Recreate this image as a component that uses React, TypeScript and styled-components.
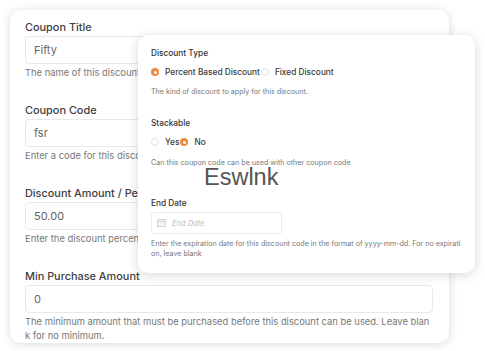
import React from "react";
import styled, { createGlobalStyle } from "styled-components";

const GlobalStyle = createGlobalStyle`
	html, body {
		margin: 0;
		padding: 0;
		background: #ffffff;
	}
	body {
		font-family: Inter, "Liberation Sans", sans-serif;
		-webkit-font-smoothing: antialiased;
	}
	* {
		box-sizing: border-box;
	}
`;

const backFields = [
	{ label: "Coupon Title", value: "Fifty", help: "The name of this discount" },
	{ label: "Coupon Code", value: "fsr", help: "Enter a code for this discount, such as 10PERCENT." },
	{ label: "Discount Amount / Percentage", value: "50.00", help: "Enter the discount percentage. 10 = 10%" },
	{
		label: "Min Purchase Amount",
		value: "0",
		help: "The minimum amount that must be purchased before this discount can be used. Leave blank for no minimum.",
	},
];

export default function App() {
	return (
		<>
			<GlobalStyle />
			<Stage>
				<BackCard>
					{backFields.map((field, index) => (
						<Field key={index}>
							<Label>{field.label}</Label>
							<Input>{field.value}</Input>
							<Help>{field.help}</Help>
						</Field>
					))}
				</BackCard>
				<FrontCard>
					<Title>Discount Type</Title>
					<RadioRow>
						<Radio checked />
						<RadioLabel>Percent Based Discount</RadioLabel>
						<Radio />
						<RadioLabel $wide>Fixed Discount</RadioLabel>
					</RadioRow>
					<SmallHelp $gap={9}>The kind of discount to apply for this discount.</SmallHelp>
					<Title $gap={19}>Stackable</Title>
					<RadioRow>
						<Radio />
						<RadioLabel>Yes</RadioLabel>
						<Radio checked />
						<RadioLabel $wide>No</RadioLabel>
					</RadioRow>
					<SmallHelp $gap={10}>Can this coupon code can be used with other coupon code</SmallHelp>
					<Title $gap={28}>End Date</Title>
					<DateInput>
						<CalendarIcon width="9" height="8" viewBox="0 0 9 8">
							<rect x="0.5" y="0.5" width="8" height="7" fill="#f2f2f2" stroke="#d6d6d6" />
							<line x1="0.5" y1="2.5" x2="8.5" y2="2.5" stroke="#d6d6d6" />
						</CalendarIcon>
						<Placeholder>End Date</Placeholder>
					</DateInput>
					<SmallHelp $gap={5}>
						Enter the expiration date for this discount code in the format of yyyy-mm-dd. For no expiration, leave blank
					</SmallHelp>
					<Watermark>Eswlnk</Watermark>
				</FrontCard>
			</Stage>
		</>
	);
}

const Stage = styled.div`
	position: relative;
	width: 485px;
	height: 351px;
	overflow: hidden;
	padding-top: 10px;
	padding-left: 10px;
`;
const BackCard = styled.div`
	width: 439px;
	height: 333px;
	background: #ffffff;
	border-radius: 10px;
	box-shadow: 0 1px 10px rgba(0, 0, 0, 0.15);
	padding: 8px 16px 0 15px;
	overflow: hidden;
`;
const Field = styled.div`
	margin-bottom: 21px;
`;
const Label = styled.div`
	font-size: 10.9px;
	font-weight: 500;
	line-height: 18px;
	color: #404040;
`;
const Input = styled.div`
	height: 28px;
	border: 1px solid #e8e8e8;
	border-radius: 4px;
	padding: 0 8px;
	display: flex;
	align-items: center;
	font-size: 11px;
	color: #666666;
`;
const Help = styled.div`
	margin-top: 2px;
	font-size: 9.4px;
	line-height: 14px;
	color: #777777;
	word-break: break-all;
`;
const FrontCard = styled.div`
	position: absolute;
	left: 138px;
	top: 35px;
	width: 337px;
	height: 238px;
	background: #ffffff;
	border-radius: 10px;
	box-shadow: 0 2px 12px rgba(0, 0, 0, 0.16);
	padding: 11px 12px 0 13px;
`;
const Title = styled.div<{ $gap?: number }>`
	margin-top: ${(p) => p.$gap ?? 0}px;
	font-size: 8.3px;
	font-weight: 500;
	line-height: 14px;
	color: #333333;
`;
const RadioRow = styled.div`
	margin-top: 6px;
	height: 12px;
	display: flex;
	align-items: center;
`;
const Radio = styled.span<{ checked?: boolean }>`
	width: 8px;
	height: 8px;
	border-radius: 50%;
	flex-shrink: 0;
	${(p) =>
		p.checked
			? `background: #ef8a3d; border: none; position: relative;
			   &::after { content: ""; position: absolute; left: 2.5px; top: 2.5px; width: 3px; height: 3px; border-radius: 50%; background: #fff; }`
			: `background: #fff; border: 1px solid #e2e2e2;`}
`;
const RadioLabel = styled.span<{ $wide?: boolean }>`
	margin-left: 6px;
	margin-right: ${(p) => (p.$wide ? 0 : 1)}px;
	font-size: 8.3px;
	font-weight: 500;
	color: #3a3a3a;
	white-space: nowrap;
`;
const SmallHelp = styled.div<{ $gap?: number }>`
	margin-top: ${(p) => p.$gap ?? 0}px;
	font-size: 7.15px;
	line-height: 10px;
	color: #777777;
	word-break: break-all;
`;
const DateInput = styled.div`
	margin-top: 2px;
	width: 131px;
	height: 22px;
	border: 1px solid #ececec;
	border-radius: 3px;
	display: flex;
	align-items: center;
	padding-left: 5px;
`;
const CalendarIcon = styled.svg`
	flex-shrink: 0;
`;
const Placeholder = styled.span`
	margin-left: 6px;
	font-size: 7.5px;
	font-style: italic;
	color: #bbbbbb;
`;
const Watermark = styled.div`
	position: absolute;
	left: 66px;
	top: 129px;
	font-family: "Liberation Sans", Arial, sans-serif;
	font-size: 23.5px;
	line-height: 26px;
	color: #555555;
	pointer-events: none;
`;
